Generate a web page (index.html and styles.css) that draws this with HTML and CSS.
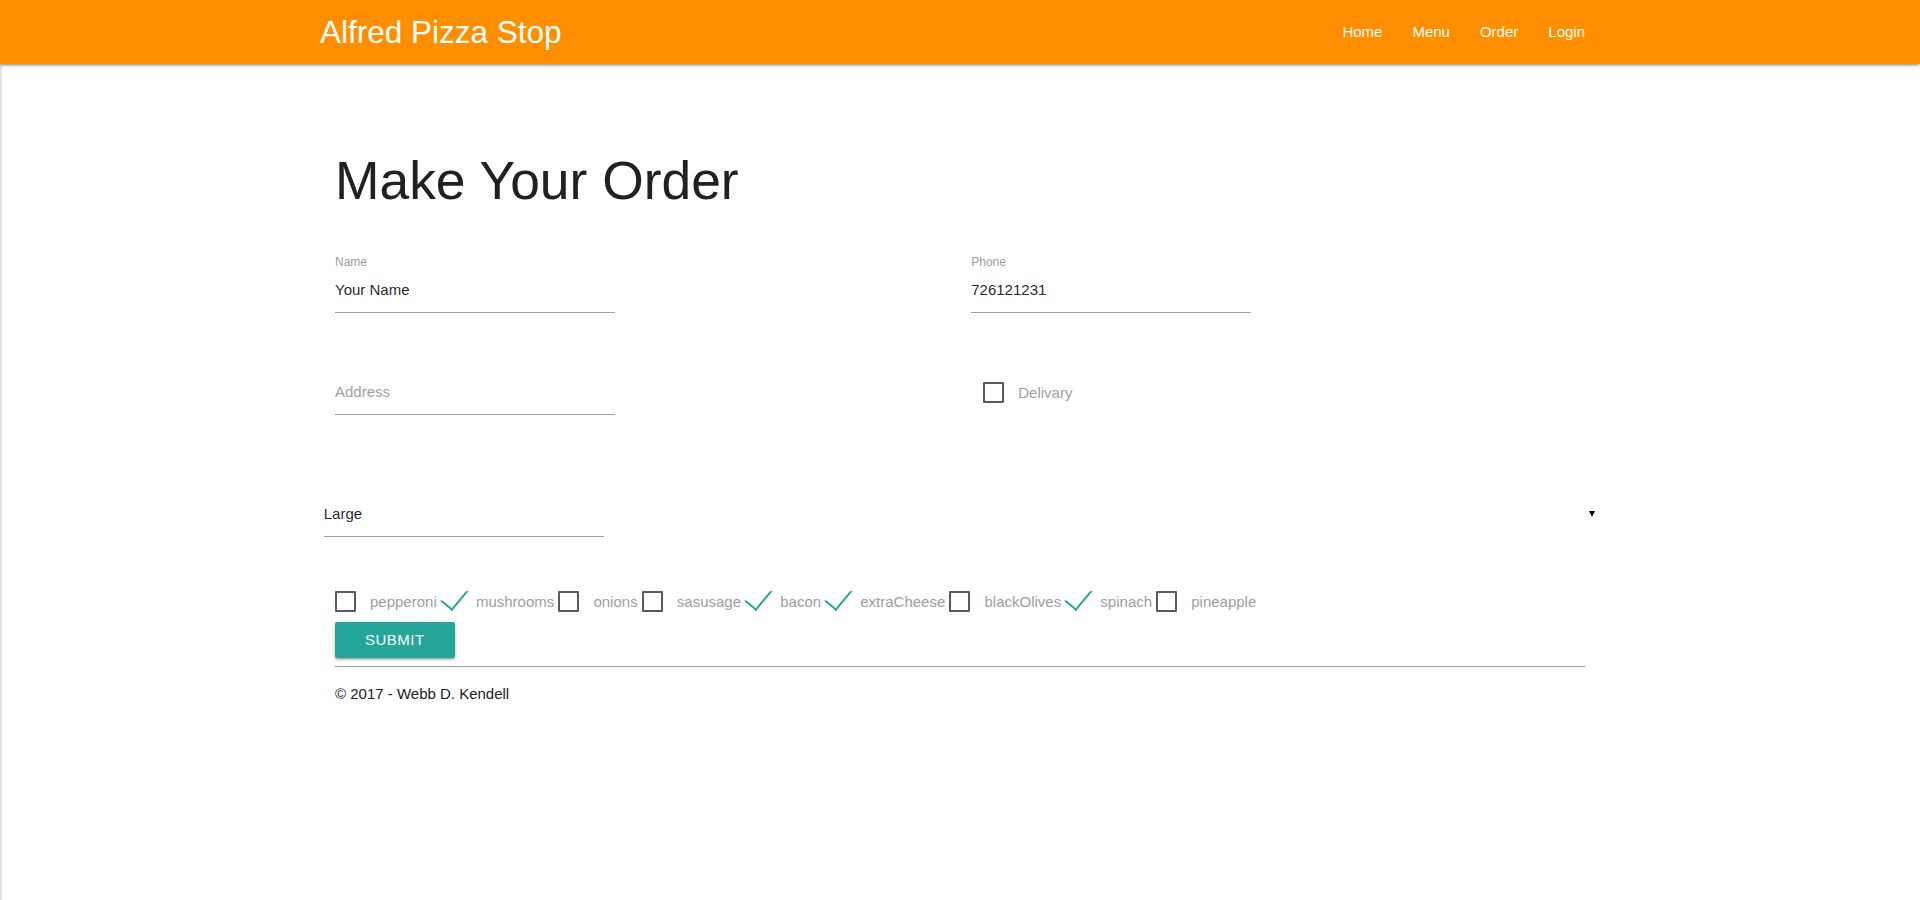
FILE: index.html
```html
<!DOCTYPE html>
<html lang="en">
<head>
<meta charset="utf-8">
<title>Make Your Order - Alfred Pizza Stop</title>
<link rel="stylesheet" href="styles.css">
</head>
<body>
<nav class="navbar">
  <div class="nav-inner">
    <a class="brand" href="#">Alfred Pizza Stop</a>
    <ul class="nav-links">
      <li><a href="#">Home</a></li>
      <li><a href="#">Menu</a></li>
      <li><a href="#">Order</a></li>
      <li><a href="#">Login</a></li>
    </ul>
  </div>
</nav>
<div class="page">
  <main class="content">
    <h2 class="title">Make Your Order</h2>
    <form class="order-form">
      <div class="form-row">
        <div class="field">
          <label class="field-label" for="name">Name</label>
          <input class="text-input" id="name" type="text" value="Your Name">
        </div>
        <div class="field">
          <label class="field-label" for="phone">Phone</label>
          <input class="text-input" id="phone" type="text" value="726121231">
        </div>
      </div>
      <div class="form-row">
        <div class="field">
          <input class="text-input" id="address" type="text" placeholder="Address">
        </div>
        <div class="delivery">
          <label class="check"><input class="check-input" type="checkbox"><span class="check-text">Delivary</span></label>
        </div>
      </div>
      <div class="select-row">
        <input class="text-input select-input" type="text" value="Large" readonly>
        <span class="caret"></span>
      </div>
      <div class="toppings">
        <label class="check"><input class="check-input" type="checkbox"><span class="check-text">pepperoni</span></label>
        <label class="check"><input class="check-input" type="checkbox" checked><span class="check-text">mushrooms</span></label>
        <label class="check"><input class="check-input" type="checkbox"><span class="check-text">onions</span></label>
        <label class="check"><input class="check-input" type="checkbox"><span class="check-text">sasusage</span></label>
        <label class="check"><input class="check-input" type="checkbox" checked><span class="check-text">bacon</span></label>
        <label class="check"><input class="check-input" type="checkbox" checked><span class="check-text">extraCheese</span></label>
        <label class="check"><input class="check-input" type="checkbox"><span class="check-text">blackOlives</span></label>
        <label class="check"><input class="check-input" type="checkbox" checked><span class="check-text">spinach</span></label>
        <label class="check"><input class="check-input" type="checkbox"><span class="check-text">pineapple</span></label>
      </div>
      <button class="btn" type="button">Submit</button>
    </form>
    <hr class="rule">
    <footer class="footer">
      <p>&copy; 2017 - Webb D. Kendell</p>
    </footer>
  </main>
</div>
</body>
</html>
```
FILE: styles.css
```css
* {
  box-sizing: border-box;
}

html,
body {
  margin: 0;
  padding: 0;
}

body {
  font-family: "Liberation Sans", Arial, sans-serif;
  font-size: 15px;
  color: rgba(0, 0, 0, 0.87);
  background: #fff;
}

.navbar {
  position: relative;
  z-index: 1;
  height: 64px;
  background: #ff8f00;
  box-shadow: 0 2px 2px 0 rgba(0, 0, 0, 0.14), 0 3px 1px -2px rgba(0, 0, 0, 0.12), 0 1px 5px 0 rgba(0, 0, 0, 0.2);
}

.nav-inner {
  width: 1280px;
  height: 64px;
  margin: 0 auto;
  display: flex;
  justify-content: space-between;
}

.brand {
  color: #fff;
  font-size: 31.5px;
  line-height: 64px;
  text-decoration: none;
}

.nav-links {
  list-style: none;
  margin: 0;
  padding: 0;
  display: flex;
}

.nav-links a {
  display: block;
  padding: 0 15px;
  color: #fff;
  font-size: 15px;
  line-height: 64px;
  text-decoration: none;
}

.page {
  min-height: calc(100vh - 64px);
  box-shadow: inset 2px 0 0 #e4e4e4;
}

.content {
  width: 1280px;
  margin: 0 auto;
  padding: 87px 15px 0;
}

.title {
  margin: 0 0 48px;
  font-size: 53.4px;
  line-height: 59px;
  font-weight: 400;
  color: #212121;
}

.form-row {
  display: grid;
  grid-template-columns: 1fr 1fr;
  column-gap: 22.5px;
}

.form-row + .form-row {
  margin-top: 56px;
}

.field-label {
  display: block;
  font-size: 12px;
  line-height: 9px;
  color: #9e9e9e;
}

.text-input {
  display: block;
  width: 280px;
  height: 46px;
  margin: 0;
  padding: 0;
  border: 0;
  border-bottom: 1px solid #9e9e9e;
  border-radius: 0;
  background: transparent;
  outline: none;
  font-family: "Liberation Sans", Arial, sans-serif;
  font-size: 15px;
  color: rgba(0, 0, 0, 0.87);
}

.text-input::placeholder {
  color: #9e9e9e;
  opacity: 1;
}

.delivery {
  padding: 11px 0 0 12px;
}

.check {
  position: relative;
  display: inline-block;
  height: 25px;
  padding-left: 35px;
  line-height: 25px;
  font-size: 15px;
  color: #9e9e9e;
}

.check-input {
  position: absolute;
  opacity: 0;
  width: 0;
  height: 0;
  margin: 0;
}

.check-text::before {
  content: "";
  position: absolute;
  top: 0;
  left: 0;
  width: 17px;
  height: 17px;
  margin-top: 2px;
  border: 2px solid #5a5a5a;
  border-radius: 1px;
}

.check-input:checked + .check-text::before {
  top: -4px;
  left: -5px;
  width: 12px;
  height: 22px;
  margin-top: 0;
  border: 2px solid transparent;
  border-right-color: #26a69a;
  border-bottom-color: #26a69a;
  border-radius: 0;
  transform: rotate(40deg);
  transform-origin: 100% 100%;
}

.select-row {
  display: flex;
  align-items: center;
  justify-content: space-between;
  margin: 76px -11.25px 0;
}

.select-input {
  cursor: pointer;
}

.caret {
  width: 0;
  height: 0;
  margin-right: 1px;
  border-left: 3.5px solid transparent;
  border-right: 3.5px solid transparent;
  border-top: 6px solid #000;
}

.toppings {
  margin-top: 52px;
  height: 25px;
  line-height: 25px;
  white-space: nowrap;
}

.btn {
  display: block;
  margin: 8px 0 0;
  height: 36px;
  padding: 0 30px;
  border: 0;
  border-radius: 2px;
  background: #26a69a;
  color: #fff;
  font-family: "Liberation Sans", Arial, sans-serif;
  font-size: 15px;
  line-height: 36px;
  letter-spacing: 0.5px;
  text-transform: uppercase;
  box-shadow: 0 2px 2px 0 rgba(0, 0, 0, 0.14), 0 3px 1px -2px rgba(0, 0, 0, 0.12), 0 1px 5px 0 rgba(0, 0, 0, 0.2);
  cursor: pointer;
}

.rule {
  margin: 8px 0 0;
  border: 0;
  border-top: 1px solid #9e9e9e;
}

.footer p {
  margin: 16px 0 0;
  line-height: 22.5px;
  color: #212121;
}
```
